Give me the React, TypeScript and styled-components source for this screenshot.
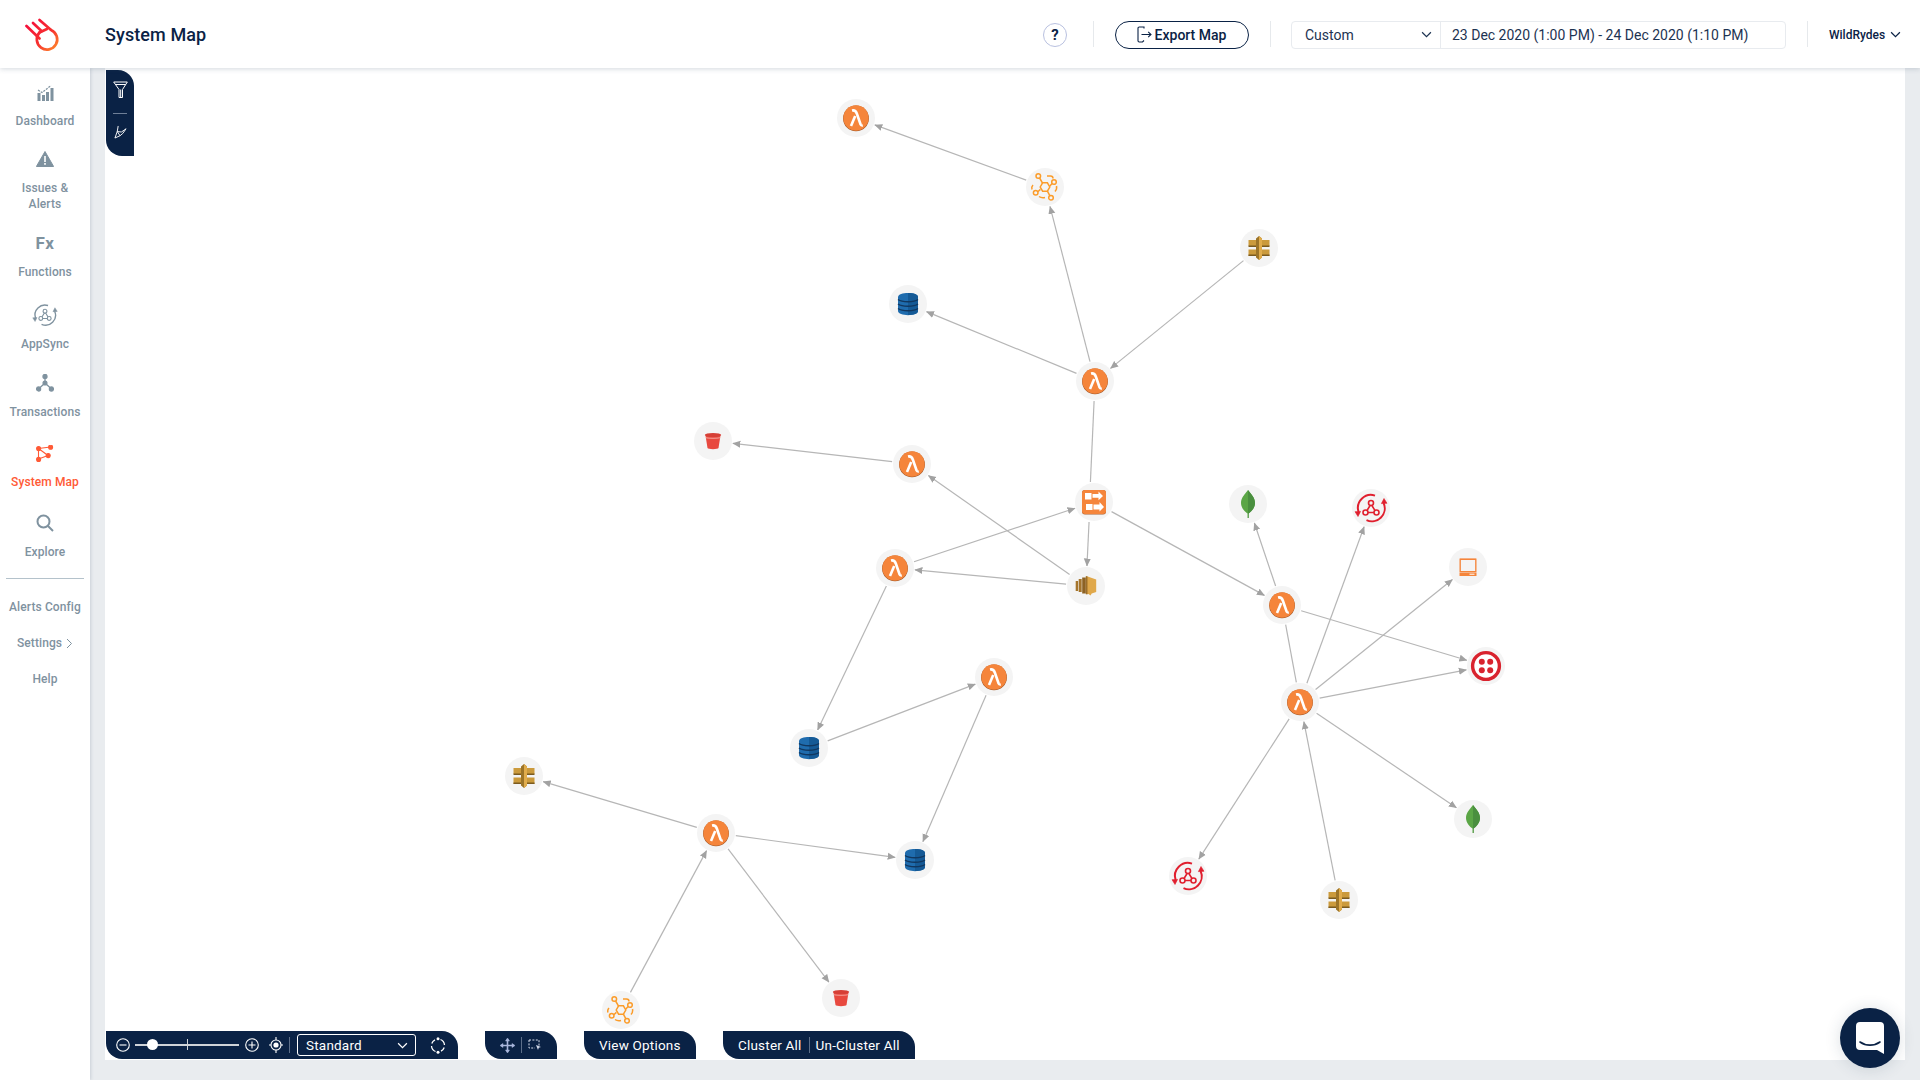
import React from "react";
import styled, { createGlobalStyle } from "styled-components";

const NAVY = "#0a2245";
const GREY = "#7f929f";
const ACTIVE = "#ff5a36";
const CANVAS_X = 105;
const CANVAS_Y = 68;

const Global = createGlobalStyle`
  html, body { margin: 0; padding: 0; background: #e9ecef; }
  body { font-family: Roboto, "Liberation Sans", sans-serif; }
  * { box-sizing: border-box; }
`;

const Page = styled.div`
  width: 1920px;
  height: 1080px;
  display: flex;
  flex-direction: column;
  overflow: hidden;
  background: #e9ecef;
`;

const Header = styled.header`
  height: 68px;
  flex: none;
  display: flex;
  align-items: center;
  background: #fff;
  padding: 0 19px 0 25px;
  gap: 21px;
  box-shadow: 0 1px 5px rgba(60, 80, 110, 0.22);
  position: relative;
  z-index: 3;
`;

const Title = styled.h1`
  margin: 0 auto 0 21px;
  font-size: 18px;
  font-weight: 500;
  letter-spacing: 0.1px;
  color: ${NAVY};
`;

const Help = styled.div`
  width: 24px;
  height: 24px;
  margin: 1px 5px 0 0;
  border-radius: 50%;
  border: 1px solid #b9c1e0;
  display: flex;
  align-items: center;
  justify-content: center;
  font-size: 15px;
  font-weight: 700;
  color: ${NAVY};
`;

const Rule = styled.span`
  width: 1px;
  height: 26px;
  background: #e6e9ec;
`;

const ExportButton = styled.button`
  width: 134px;
  height: 28px;
  margin-top: 1px;
  border: 1px solid ${NAVY};
  border-radius: 14px;
  background: #fff;
  display: flex;
  align-items: center;
  justify-content: center;
  gap: 3px;
  padding: 0 2px 0 0;
  font: 500 14px Roboto, sans-serif;
  color: ${NAVY};
`;

const DateBox = styled.div`
  width: 495px;
  height: 28px;
  margin: 1px 0 0 -1px;
  display: flex;
  border: 1px solid #e8ebef;
  border-radius: 4px;
  font-size: 14px;
  color: #1d3352;
`;

const RangeSelect = styled.div`
  width: 149px;
  display: flex;
  align-items: center;
  justify-content: space-between;
  padding: 0 8px 0 13px;
  border-right: 1px solid #e8ebef;
`;

const RangeText = styled.div`
  flex: 1;
  display: flex;
  align-items: center;
  padding-left: 11px;
`;

const User = styled.div`
  width: 72px;
  margin-top: 1px;
  display: flex;
  align-items: center;
  justify-content: space-between;
  font-size: 12px;
  font-weight: 500;
  color: ${NAVY};
`;

const Body = styled.div`
  flex: 1;
  display: flex;
  min-height: 0;
`;

const Sidebar = styled.nav`
  width: 90px;
  flex: none;
  background: #fff;
  display: flex;
  flex-direction: column;
  align-items: center;
  padding-top: 12px;
  box-shadow: 1px 0 3px rgba(60, 80, 110, 0.18);
  position: relative;
  z-index: 2;
`;

const NavItem = styled.div<{ $gap: number; $active?: boolean }>`
  margin-top: ${(p) => p.$gap}px;
  display: flex;
  flex-direction: column;
  align-items: center;
  gap: 9px;
  color: ${(p) => (p.$active ? ACTIVE : GREY)};
  font-size: 12px;
  font-weight: 500;
  line-height: 16px;
  text-align: center;
  letter-spacing: 0.1px;
  white-space: nowrap;
`;

const NavIcon = styled.div`
  height: 24px;
  display: flex;
  align-items: center;
  justify-content: center;
`;

const FxGlyph = styled.span`
  font-size: 17px;
  font-weight: 700;
  letter-spacing: 0.5px;
`;

const NavRule = styled.hr`
  width: 78px;
  height: 1px;
  margin: 18px 0 0;
  border: 0;
  background: #b4c2cb;
`;

const NavLink = styled.div<{ $gap: number }>`
  margin-top: ${(p) => p.$gap}px;
  display: flex;
  align-items: center;
  gap: 4px;
  height: 16px;
  color: ${GREY};
  font-size: 12px;
  font-weight: 500;
  letter-spacing: 0.1px;
  white-space: nowrap;
`;

const Workspace = styled.main`
  flex: 1;
  padding: 0 15px 20px;
  min-width: 0;
`;

const Canvas = styled.div`
  position: relative;
  height: 100%;
  background: #fff;
`;

const Edges = styled.svg`
  position: absolute;
  inset: 0;
  width: 100%;
  height: 100%;
`;

const NodeDot = styled.div<{ $x: number; $y: number }>`
  position: absolute;
  left: ${(p) => p.$x - 19}px;
  top: ${(p) => p.$y - 19}px;
  width: 38px;
  height: 38px;
  border-radius: 50%;
  background: #f4f4f4;
`;

const Panel = styled.div`
  background: ${NAVY};
  border-radius: 0 16px 0 16px;
  color: #fff;
`;

const FilterPanel = styled(Panel)`
  position: absolute;
  left: 1px;
  top: 2px;
  width: 28px;
  height: 86px;
  display: flex;
  flex-direction: column;
  align-items: center;
  padding-top: 11px;
`;

const FilterRule = styled.span`
  width: 14px;
  height: 1px;
  margin: 15px 0 11px;
  background: #6e7f97;
`;

const BottomBar = styled.div`
  position: absolute;
  left: 1px;
  bottom: 1px;
  display: flex;
  gap: 27px;
`;

const BarPanel = styled(Panel)<{ $w: number; $pad?: number }>`
  width: ${(p) => p.$w}px;
  height: 28px;
  display: flex;
  align-items: center;
  padding-left: ${(p) => p.$pad ?? 0}px;
  font-size: 13.5px;
  letter-spacing: 0.2px;
  white-space: nowrap;
`;

const Track = styled.div`
  position: relative;
  width: 104px;
  height: 2px;
  margin: 0 6px 0 5px;
  background: #cfd3d8;
`;

const Thumb = styled.span`
  position: absolute;
  left: 12px;
  top: -5px;
  width: 11px;
  height: 11px;
  border-radius: 50%;
  background: #fff;
`;

const Tick = styled.span`
  position: absolute;
  left: 52px;
  top: -5px;
  width: 1px;
  height: 11px;
  background: #cfd3d8;
`;

const BarRule = styled.span<{ $m: string; $h?: number }>`
  width: 1px;
  height: ${(p) => p.$h ?? 16}px;
  margin: ${(p) => p.$m};
  background: #5d6f8a;
`;

const ModeSelect = styled.div`
  width: 119px;
  height: 22px;
  border: 1px solid #fff;
  border-radius: 3px;
  display: flex;
  align-items: center;
  justify-content: space-between;
  padding: 0 7px 0 8px;
  margin-right: 14px;
`;

const TargetWrap = styled.span`
  display: flex;
  margin-left: 10px;
`;

const ChatButton = styled.div`
  position: absolute;
  right: 5px;
  bottom: -8px;
  width: 60px;
  height: 60px;
  border-radius: 50%;
  background: ${NAVY};
  display: flex;
  align-items: center;
  justify-content: center;
  box-shadow: 0 1px 16px rgba(40, 60, 90, 0.16);
`;

/* ---------- icons ---------- */

const Chevron = ({ c = "currentColor", s = 10 }: { c?: string; s?: number }) => (
  <svg width={s} height={s} viewBox="0 0 10 10" fill="none" stroke={c} strokeWidth="1.1">
    <path d="M1 3l4 4 4-4" />
  </svg>
);

const Logo = () => (
  <svg width="38" height="36" viewBox="25 16 38 36" fill="none">
    <defs>
      <linearGradient id="lg" gradientUnits="userSpaceOnUse" x1="30" y1="22" x2="58" y2="50">
        <stop offset="0" stopColor="#f5103a" />
        <stop offset="0.55" stopColor="#f6322f" />
        <stop offset="1" stopColor="#ff8f2a" />
      </linearGradient>
    </defs>
    <g stroke="url(#lg)" strokeWidth="2.700" strokeLinecap="round">
      <path d="M39.500 32.500A10.200 10.200 0 1 0 51 30" />
      <path d="M26.500 26L39.500 38.500" />
      <path d="M33 23L41.500 31" />
      <path d="M39.500 20L50.500 29.500" />
      <path d="M39.500 32.500L47 29" />
    </g>
  </svg>
);

const ExportIcon = () => (
  <svg width="16" height="17" viewBox="0 0 16 17" fill="none" stroke={NAVY} strokeWidth="1.1">
    <path d="M8 2.500V1H3.200C2.500 1 2 1.500 2 2.200v12.600c0 .7.5 1.200 1.200 1.200H6.500l1.500-1.500M5.500 8.500H15M12.200 5.800l2.800 2.700-2.800 2.700" />
  </svg>
);

const DashIcon = () => (
  <svg width="17" height="17" viewBox="0 0 17 17" fill={GREY}>
    <rect x="0.500" y="9" width="3" height="8" />
    <rect x="5" y="11" width="3" height="6" />
    <rect x="9" y="8" width="3" height="9" />
    <rect x="13.500" y="4" width="3" height="13" />
    <path d="M1 6l4 2.500 4-3 5-4" fill="none" stroke={GREY} strokeWidth="1.200" strokeDasharray="2.200 1" />
  </svg>
);

const AlertIcon = () => (
  <svg width="18" height="16" viewBox="0 0 18 16">
    <path d="M9 0.500l8.600 15H.4z" fill={GREY} stroke={GREY} strokeLinejoin="round" />
    <rect x="8.200" y="5" width="1.600" height="6" fill="#fff" />
    <rect x="8.200" y="12" width="1.600" height="1.800" fill="#fff" />
  </svg>
);

const SyncArt = ({ c, w = 2, bg = "#f4f4f4" }: { c: string; w?: number; bg?: string }) => (
  <g fill="none" stroke={c} strokeWidth={w}>
    <path d="M-12.400 4A13 13 0 0 1 4-12.400" />
    <path d="M12.600 -5A13 13 0 0 1 -4.500 12.200" />
    <path d="M-13 8.500l-3-4.800 5.600-.3z" fill={c} strokeWidth="0.600" />
    <path d="M13 -9.500l3 4.800-5.600.3z" fill={c} strokeWidth="0.600" />
    <path d="M0-4L-5.200 4.500H5.200z" strokeWidth={w * 0.8} />
    <circle cx="0" cy="-5" r="2.500" fill={bg} strokeWidth={w * 0.8} />
    <circle cx="-5.500" cy="4.500" r="2.500" fill={bg} strokeWidth={w * 0.8} />
    <circle cx="5.500" cy="4.500" r="2.500" fill={bg} strokeWidth={w * 0.8} />
  </g>
);

const SyncNavIcon = () => (
  <svg width="26" height="26" viewBox="-17 -17 34 34">
    <SyncArt c={GREY} w={1.800} bg="#fff" />
  </svg>
);

const TxIcon = () => (
  <svg width="18" height="18" viewBox="0 0 18 18" fill={GREY} stroke={GREY} strokeWidth="1.300">
    <path d="M9 2v7M9 9L2.500 15M9 9l6.500 6" fill="none" />
    <circle cx="9" cy="2.400" r="2" />
    <circle cx="9" cy="9" r="1.900" />
    <circle cx="2.600" cy="15" r="2" />
    <circle cx="15.400" cy="15" r="2" />
  </svg>
);

const MapIcon = () => (
  <svg width="18" height="17" viewBox="0 0 18 17" fill={ACTIVE} stroke={ACTIVE} strokeWidth="1.100">
    <path d="M2.500 3.500L14.500 2M2.500 3.500V14M2.500 3.500L12 10.500M2.500 14L12 10.500" fill="none" />
    <circle cx="2.600" cy="3.600" r="2" />
    <circle cx="14.600" cy="2.200" r="2" />
    <circle cx="12.200" cy="10.600" r="2" />
    <circle cx="2.600" cy="14.400" r="2" />
  </svg>
);

const SearchIcon = () => (
  <svg width="18" height="18" viewBox="0 0 18 18" fill="none" stroke={GREY} strokeWidth="2">
    <circle cx="7.500" cy="7.500" r="6" />
    <path d="M12 12l5 5" />
  </svg>
);

const SmallChevron = () => (
  <svg width="7" height="11" viewBox="0 0 7 11" fill="none" stroke={GREY} strokeWidth="1">
    <path d="M1 1l4.500 4.500L1 10" />
  </svg>
);

const FunnelIcon = () => (
  <svg width="15" height="17" viewBox="0 0 15 17" fill="none" stroke="#fff" strokeWidth="1">
    <path d="M.7 1h13.600L9.500 8.500V16.500H6V8.500zM2.500 3.500h10" />
    <path d="M7.700 8.500v8" />
  </svg>
);

const PathIcon = () => (
  <svg width="13" height="14" viewBox="0 0 14 15" fill="none" stroke="#fff" strokeWidth="1">
    <path d="M4.500 1L3.500 7 1 14l5.500-2.500L9.500 9 13 4l-5 3.500L3.500 7" />
    <path d="M3.500 7l3 4.500" />
  </svg>
);

const CircleGlyph = ({ plus }: { plus?: boolean }) => (
  <svg width="14" height="14" viewBox="0 0 14 14" fill="none" stroke="#fff" strokeWidth="1.100">
    <circle cx="7" cy="7" r="6.300" />
    <path d={plus ? "M3.500 7h7M7 3.500v7" : "M3.500 7h7"} />
  </svg>
);

const TargetIcon = () => (
  <svg width="14" height="16" viewBox="0 0 14 16" fill="none" stroke="#fff" strokeWidth="1.100">
    <circle cx="7" cy="8" r="5" />
    <circle cx="7" cy="8" r="2.600" fill="#fff" stroke="none" />
    <path d="M7 0v3M7 13v3M0 8h2M12 8h2" />
  </svg>
);

const LayoutIcon = () => (
  <svg width="16" height="17" viewBox="0 0 16 17" fill="none" stroke="#fff" strokeWidth="1.300">
    <path d="M10.500 2.500a6.500 6.500 0 0 1 4 5.500" />
    <path d="M5.500 14.500a6.500 6.500 0 0 1-4-5.500" />
    <path d="M1.800 6.500A6.500 6.500 0 0 1 5 2.800" />
    <path d="M14.200 10.500A6.500 6.500 0 0 1 11 14.200" />
    <circle cx="8" cy="1.800" r="1.500" fill="#fff" stroke="none" />
    <circle cx="8" cy="15.200" r="1.500" fill="#fff" stroke="none" />
  </svg>
);

const MoveIcon = () => (
  <svg width="15" height="15" viewBox="0 0 15 15" fill="#a9b6dc" stroke="#a9b6dc" strokeWidth="1.600">
    <path d="M7.500 1v13M1 7.500h13" />
    <path d="M7.500 0L5.500 3h4zM7.500 15l-2-3h4zM0 7.500L3 5.500v4zM15 7.500L12 5.500v4z" strokeWidth="0.500" />
  </svg>
);

const MarqueeIcon = () => (
  <svg width="14" height="14" viewBox="0 0 14 14" fill="none" stroke="#d5dbea" strokeWidth="1">
    <path d="M1 2h10v6M1 2v8h6" strokeDasharray="2 1.400" />
    <path d="M8 7l5 2-2.200.8L10 12z" fill="#d5dbea" stroke="none" />
  </svg>
);

const ChatIcon = () => (
  <svg width="28" height="32" viewBox="0 0 28 32">
    <path d="M4 0h20a4 4 0 0 1 4 4v28l-7-4H4a4 4 0 0 1-4-4V4a4 4 0 0 1 4-4z" fill="#fff" />
    <path d="M4 20c6 4.200 14 4.200 20 0" fill="none" stroke={NAVY} strokeWidth="1.600" strokeLinecap="round" />
  </svg>
);

/* ---------- diagram nodes ---------- */

const Lambda = () => (
  <>
    <circle cx="0" cy="0.400" r="12.900" fill="#9a5427" />
    <circle cx="0" cy="0" r="12.700" fill="#f5853b" />
    <path d="M-4-7.500c3-.6 4 .6 4.800 3L4.600 6.500c.5 1 1 1.200 2.200 1" fill="none" stroke="#fff" strokeWidth="2.600" />
    <path d="M-.8-2L-5 8" fill="none" stroke="#fff" strokeWidth="2.600" />
  </>
);

const Dynamo = () => (
  <>
    <path d="M-10-7c0-5.500 20-5.500 20 0V7C10 12.500-10 12.500-10 7z" fill="#1f6cae" />
    <path d="M0-11c6 0 10 1.500 10 4V7C10 9.800 6 11 0 11z" fill="#155a96" />
    <path d="M-10-4.500c4 3 16 3 20 0M-10 0c4 3 16 3 20 0M-10 4.500c4 3 16 3 20 0" fill="none" stroke="#11375f" strokeWidth="1.500" />
  </>
);

const Bucket = () => (
  <>
    <path d="M-7.500-5.500h15L5.500 7c-.2 1.500-10.800 1.500-11 0z" fill="#e8493f" />
    <ellipse cx="0" cy="-6" rx="8.200" ry="2" fill="#d63f36" />
    <path d="M-7.800-3.300c5 .8 10.600 .8 15.600 0" fill="none" stroke="#f8c9c3" strokeWidth="0.700" />
  </>
);

const Api = () => (
  <>
    <rect x="-10.500" y="-8" width="7.500" height="6" fill="#cb9a3c" />
    <rect x="-10.500" y="1.500" width="7.500" height="6.500" fill="#cb9a3c" />
    <rect x="3" y="-8" width="7.500" height="6" fill="#cb9a3c" />
    <rect x="3" y="1.500" width="7.500" height="6.500" fill="#cb9a3c" />
    <rect x="-10.500" y="-2.500" width="7.500" height="1.500" fill="#7a5a1f" />
    <rect x="-10.500" y="6.500" width="7.500" height="1.500" fill="#7a5a1f" />
    <rect x="3" y="-2.500" width="7.500" height="1.500" fill="#7a5a1f" />
    <rect x="3" y="6.500" width="7.500" height="1.500" fill="#7a5a1f" />
    <path d="M0-12l3 2.500V9.500L0 12l-3-2.500V-9.500z" fill="#9c7428" />
    <path d="M0-12l3 2.500V9.500L0 12z" fill="#e0ac4c" />
  </>
);

const Ec2 = () => (
  <>
    <rect x="-10.300" y="-5" width="2.400" height="10" fill="#a5752c" />
    <rect x="-7.300" y="-7" width="3" height="13" fill="#a5752c" />
    <rect x="-3.800" y="-8.500" width="3.600" height="16" fill="#8d6223" />
    <path d="M.2-10l10 3.500V6l-4.500 1.500L4.500 9.500 2.500 8 .2 8.300z" fill="#e0a84a" />
    <path d="M-.2-10L1.500-9.500V8.200L-.2 8.300z" fill="#9b6f2a" />
  </>
);

const Step = () => (
  <>
    <rect x="-12" y="-12" width="24" height="24.500" rx="3" fill="#a85d2c" />
    <rect x="-12" y="-12" width="24" height="24" rx="3" fill="#f5853b" />
    <rect x="-9" y="-9" width="6.500" height="6.500" fill="#fff" />
    <path d="M-1.500-8h6V-10.500L9-6 4.500-1.800V-4.200h-6z" fill="#fff" />
    <rect x="-8" y="2" width="6.500" height="6" fill="#fff" />
    <path d="M-.5 2.500h6V0L10 5 5.500 9.500V7.500h-6z" fill="#fff" />
  </>
);

const Mongo = () => (
  <>
    <path d="M0-14C3-10 7-6.500 7-1 7 4 3 8 .6 9.500V14H-.5V9.500C-3 8-7 4-7-1-7-6.500-3-10 0-14z" fill="#5ba646" />
    <path d="M0-14C3-10 7-6.500 7-1 7 4 3 8 .6 9.500V14H0z" fill="#4a8f3f" />
  </>
);

const Laptop = () => (
  <>
    <rect x="-7.800" y="-8.300" width="15.600" height="13" fill="none" stroke="#f5a877" strokeWidth="1.200" />
    <rect x="-7.800" y="-7.500" width="15.600" height="12" fill="none" stroke="#f5853b" strokeWidth="1" />
    <rect x="-8.500" y="5.500" width="17" height="3.500" fill="#f5853b" />
    <rect x="1.500" y="6.700" width="5" height="1" fill="#fff" />
  </>
);

const Twilio = () => (
  <>
    <circle cx="0" cy="0" r="13.400" fill="#fff" stroke="#d9232e" strokeWidth="3.400" />
    <circle cx="-4.200" cy="-4.200" r="3" fill="#d9232e" />
    <circle cx="4.200" cy="-4.200" r="3" fill="#d9232e" />
    <circle cx="-4.200" cy="4.200" r="3" fill="#d9232e" />
    <circle cx="4.200" cy="4.200" r="3" fill="#d9232e" />
  </>
);

const EventBus = () => (
  <g fill="none" stroke="#fb9c2a" strokeWidth="1.500">
    <path d="M-4.800 0L-2.400-4.200H2.400L4.800 0 2.400 4.200H-2.400z" />
    <circle cx="-6.700" cy="-11" r="2.300" />
    <circle cx="9" cy="-5" r="2.300" />
    <circle cx="-9.300" cy="5.700" r="2.300" />
    <circle cx="6" cy="10.700" r="2.300" />
    <path d="M-5.400-9L-2.600-4.200M7.200-3.500L4.800-1M-7.200 4.800L-4.600 2.400M4.800 8.700L2.400 4.200" />
    <path d="M2-11h3.500c1.500 0 2.500 1 2.500 2.500M11.500-1c.5 2.500 0 4-1.500 5.500M-12-2c-1.500 1.500-1.500 3-1 4.500M-6 9.500c2 1.500 4 1.500 6 1" />
  </g>
);

const AppSync = () => <SyncArt c="#e01f2e" />;

type Kind = "lambda" | "dynamo" | "bucket" | "api" | "ec2" | "step" | "mongo" | "laptop" | "twilio" | "event" | "sync";

const ART: Record<Kind, React.FC> = {
  lambda: Lambda,
  dynamo: Dynamo,
  bucket: Bucket,
  api: Api,
  ec2: Ec2,
  step: Step,
  mongo: Mongo,
  laptop: Laptop,
  twilio: Twilio,
  event: EventBus,
  sync: AppSync,
};

const NODES: Record<string, { k: Kind; x: number; y: number }> = {
  l1: { k: "lambda", x: 856, y: 118 },
  e1: { k: "event", x: 1045, y: 187 },
  a1: { k: "api", x: 1259, y: 248 },
  d1: { k: "dynamo", x: 908, y: 304 },
  l2: { k: "lambda", x: 1095, y: 381 },
  b1: { k: "bucket", x: 713, y: 441 },
  l3: { k: "lambda", x: 912, y: 464 },
  st: { k: "step", x: 1094, y: 502 },
  m1: { k: "mongo", x: 1248, y: 504 },
  s1: { k: "sync", x: 1371, y: 508 },
  lp: { k: "laptop", x: 1468, y: 567 },
  tw: { k: "twilio", x: 1486, y: 666 },
  l4: { k: "lambda", x: 1282, y: 605 },
  ec: { k: "ec2", x: 1086, y: 586 },
  l5: { k: "lambda", x: 895, y: 568 },
  l6: { k: "lambda", x: 1300, y: 702 },
  l7: { k: "lambda", x: 994, y: 677 },
  d2: { k: "dynamo", x: 809, y: 748 },
  a2: { k: "api", x: 524, y: 776 },
  l8: { k: "lambda", x: 716, y: 833 },
  d3: { k: "dynamo", x: 915, y: 860 },
  m2: { k: "mongo", x: 1473, y: 819 },
  s2: { k: "sync", x: 1188, y: 876 },
  a3: { k: "api", x: 1339, y: 900 },
  e2: { k: "event", x: 621, y: 1010 },
  b2: { k: "bucket", x: 841, y: 998 },
};

type Link = { from: string; to: string; head?: boolean; fromDx?: number; toDx?: number };

const LINKS: Link[] = [
  { from: "e1", to: "l1" },
  { from: "l2", to: "e1" },
  { from: "a1", to: "l2" },
  { from: "l2", to: "d1" },
  { from: "l3", to: "b1" },
  { from: "l2", to: "st", head: false, toDx: -4.5 },
  { from: "l5", to: "st" },
  { from: "st", to: "ec", fromDx: -4 },
  { from: "st", to: "l4" },
  { from: "ec", to: "l3" },
  { from: "ec", to: "l5" },
  { from: "l5", to: "d2" },
  { from: "d2", to: "l7" },
  { from: "l7", to: "d3" },
  { from: "l8", to: "d3" },
  { from: "l8", to: "a2" },
  { from: "e2", to: "l8" },
  { from: "l8", to: "b2" },
  { from: "l4", to: "m1" },
  { from: "l6", to: "l4", head: false },
  { from: "l6", to: "s1" },
  { from: "l6", to: "lp" },
  { from: "l6", to: "tw" },
  { from: "l4", to: "tw" },
  { from: "l6", to: "m2" },
  { from: "l6", to: "s2" },
  { from: "a3", to: "l6" },
];

function edgeGeometry({ from, to, fromDx = 0, toDx = 0 }: Link) {
  const ax = NODES[from].x + fromDx;
  const ay = NODES[from].y;
  const bx = NODES[to].x + toDx;
  const by = NODES[to].y;
  const len = Math.hypot(bx - ax, by - ay);
  const ux = (bx - ax) / len;
  const uy = (by - ay) / len;
  return {
    x1: ax - CANVAS_X + ux * 20,
    y1: ay - CANVAS_Y + uy * 20,
    x2: bx - CANVAS_X - ux * 20,
    y2: by - CANVAS_Y - uy * 20,
  };
}

const Graph = () => (
  <>
    <Edges>
      <defs>
        <marker id="arrow" viewBox="0 0 8 8" refX="7.500" refY="4" markerWidth="8" markerHeight="8" markerUnits="userSpaceOnUse" orient="auto">
          <path d="M0 .5L8 4 0 7.500z" fill="#a2a2a2" />
        </marker>
      </defs>
      {LINKS.map((l) => (
        <line
          key={l.from + l.to}
          {...edgeGeometry(l)}
          stroke="#b6b6b6"
          strokeWidth="1.200"
          markerEnd={l.head === false ? undefined : "url(#arrow)"}
        />
      ))}
    </Edges>
    {Object.entries(NODES).map(([id, n]) => {
      const Art = ART[n.k];
      return (
        <NodeDot key={id} $x={n.x - CANVAS_X} $y={n.y - CANVAS_Y}>
          <svg width="38" height="38" viewBox="-19 -19 38 38">
            <Art />
          </svg>
        </NodeDot>
      );
    })}
  </>
);

export default function App() {
  return (
    <Page>
      <Global />
      <Header>
        <Logo />
        <Title>System Map</Title>
        <Help>?</Help>
        <Rule />
        <ExportButton>
          <ExportIcon />
          Export Map
        </ExportButton>
        <Rule />
        <DateBox>
          <RangeSelect>
            Custom
            <Chevron s={11} />
          </RangeSelect>
          <RangeText>23 Dec 2020 (1:00 PM) - 24 Dec 2020 (1:10 PM)</RangeText>
        </DateBox>
        <Rule />
        <User>
          WildRydes
          <Chevron s={11} />
        </User>
      </Header>
      <Body>
        <Sidebar>
          <NavItem $gap={0}>
            <NavIcon><DashIcon /></NavIcon>
            Dashboard
          </NavItem>
          <NavItem $gap={18}>
            <NavIcon><AlertIcon /></NavIcon>
            <span>Issues &amp;<br />Alerts</span>
          </NavItem>
          <NavItem $gap={19}>
            <NavIcon><FxGlyph>Fx</FxGlyph></NavIcon>
            Functions
          </NavItem>
          <NavItem $gap={23}>
            <NavIcon><SyncNavIcon /></NavIcon>
            AppSync
          </NavItem>
          <NavItem $gap={19}>
            <NavIcon><TxIcon /></NavIcon>
            Transactions
          </NavItem>
          <NavItem $gap={21} $active>
            <NavIcon><MapIcon /></NavIcon>
            System Map
          </NavItem>
          <NavItem $gap={21}>
            <NavIcon><SearchIcon /></NavIcon>
            Explore
          </NavItem>
          <NavRule />
          <NavLink $gap={20}>Alerts Config</NavLink>
          <NavLink $gap={20}>Settings <SmallChevron /></NavLink>
          <NavLink $gap={20}>Help</NavLink>
        </Sidebar>
        <Workspace>
          <Canvas>
            <Graph />
            <FilterPanel>
              <FunnelIcon />
              <FilterRule />
              <PathIcon />
            </FilterPanel>
            <BottomBar>
              <BarPanel $w={352} $pad={10}>
                <CircleGlyph />
                <Track>
                  <Thumb />
                  <Tick />
                </Track>
                <CircleGlyph plus />
                <TargetWrap>
                  <TargetIcon />
                </TargetWrap>
                <BarRule $m="0 7px 0 6px" />
                <ModeSelect>
                  Standard
                  <Chevron s={11} />
                </ModeSelect>
                <LayoutIcon />
              </BarPanel>
              <BarPanel $w={72} $pad={15}>
                <MoveIcon />
                <BarRule $m="0 6px 0 6px" />
                <MarqueeIcon />
              </BarPanel>
              <BarPanel $w={112} $pad={15}>View Options</BarPanel>
              <BarPanel $w={192} $pad={15}>
                Cluster All
                <BarRule $m="0 6px 0 7px" />
                Un-Cluster All
              </BarPanel>
            </BottomBar>
            <ChatButton>
              <ChatIcon />
            </ChatButton>
          </Canvas>
        </Workspace>
      </Body>
    </Page>
  );
}
